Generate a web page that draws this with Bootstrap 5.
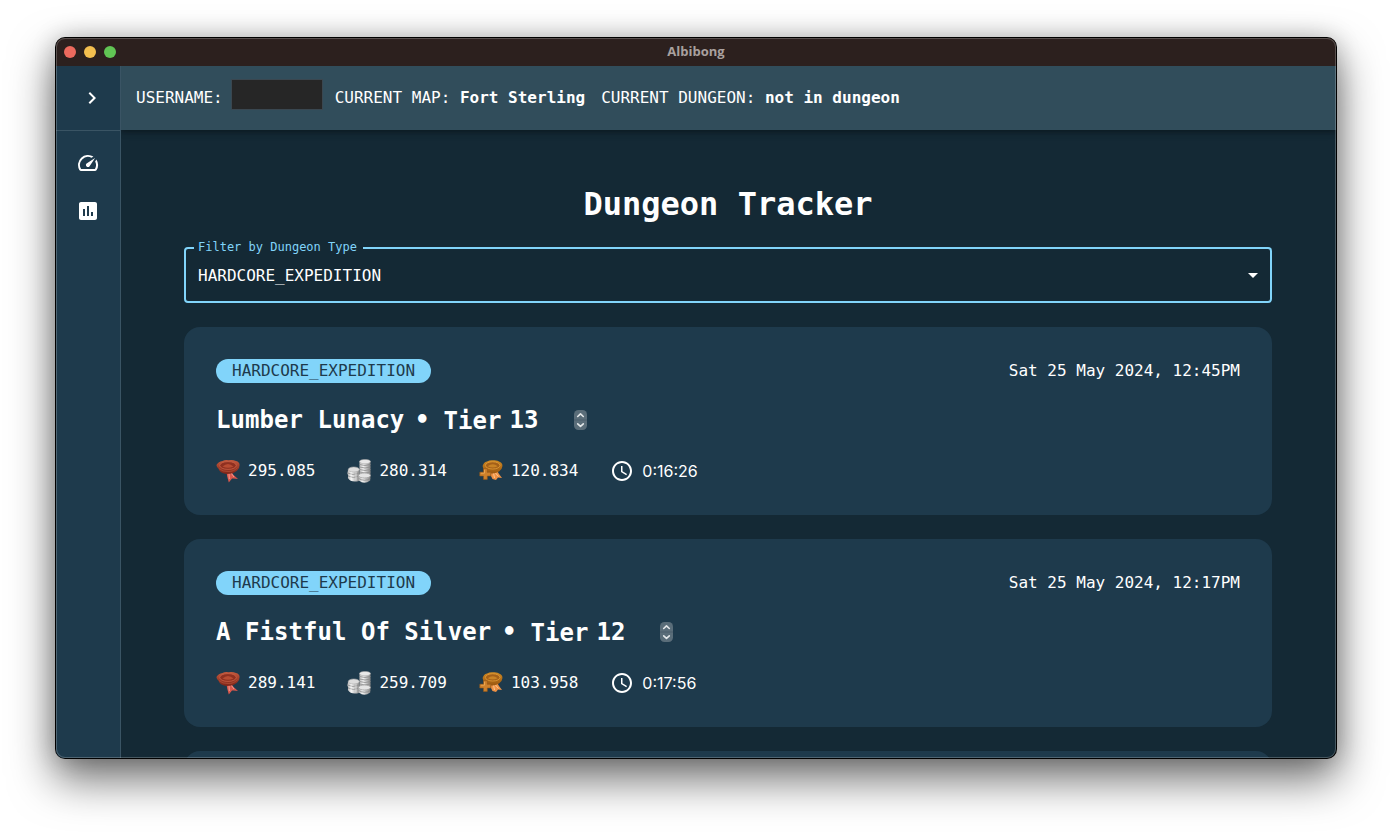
<!DOCTYPE html>
<html lang="en" data-bs-theme="dark">
<head>
<meta charset="utf-8">
<meta name="viewport" content="width=device-width, initial-scale=1">
<title>Albibong</title>
<link href="https://cdn.jsdelivr.net/npm/bootstrap@5.3.0/dist/css/bootstrap.min.css" rel="stylesheet">
<style>
body{background:#fff;color:#fff;font:16px/24px "DejaVu Sans Mono",monospace;height:832px;overflow:hidden;padding:38px 56px}
.app-window{width:1280px;height:720px;border-radius:9px;background:#142935;box-shadow:0 0 0 1px #000,0 20px 44px 2px rgba(0,0,0,.55),0 0 24px rgba(0,0,0,.22)}
.app-window::after{content:"";position:absolute;inset:0;border:1px solid rgba(255,255,255,.22);border-radius:9px;pointer-events:none;z-index:3}
.titlebar{height:28px;background:#2c201e;color:#a9a09f;font:bold 13px/27px "Open Sans",sans-serif}
.lights{left:8px;top:8px;gap:8px}
.lights span{width:12px;height:12px;border-radius:50%}
.l-red{background:#ed6a5e}.l-yellow{background:#f4bf4f}.l-green{background:#61c554}
.sidebar{width:65px;background:#1e3a4c;border-right:1px solid #3a5464;position:relative;z-index:2}
.side-toggle{height:65px;border-bottom:1px solid #3a5464;padding-left:8px}
.side-item{height:48px}
.infobar{height:64px;background:#314d5b;padding:0 15px;box-shadow:0 2px 4px -1px rgba(0,0,0,.2),0 4px 5px rgba(0,0,0,.14),0 1px 10px rgba(0,0,0,.12);z-index:1;white-space:pre}
.redacted{width:92px;height:31px;background:#262626;border:1px solid #3a4750;margin:-7px 12px 0 8px}
.content{padding:50px 64px 0 63px}
.page-title{font-size:32px;line-height:48px;font-weight:700}
.filter{height:56px;border:2px solid #81d4fa;border-radius:4px;margin:18.5px 0 24px;padding:0 5px 0 12px}
.filter-label{left:8px;top:-12px;font-size:12px;line-height:20px;color:#81d4fa;background:#142935;padding:0 6px 0 4px}
.filter-value{padding-top:2px}
.run{background:#1e3a4c;border-radius:16px;height:188px;padding:32px;margin-bottom:24px}
.type-pill{background:#81d4fa;color:#1e3a4c;border-radius:12px;padding:0 16px;height:24px;line-height:23px}
.when{line-height:23px}
.run-name{font-size:24px;line-height:36px;font-weight:700;margin-top:19px;letter-spacing:.04px}
.dot{margin:0 14px 0 10.7px}
.tier{padding-top:1px;margin-right:8px}
.stepper{width:13px;height:20px;margin-left:35px}
.stats{margin-top:19px;gap:32px;height:26px}
.stats>div{gap:8px}
.stats svg{flex:none}
.elapsed{font-family:Inter,sans-serif;font-size:16px;padding-top:1px}
</style>
</head>
<body>
<svg width="0" height="0" class="position-absolute">
<defs>
<linearGradient id="gRed" x2="0" y2="1"><stop stop-color="#c65a3d"/><stop offset="1" stop-color="#7c2418"/></linearGradient>
<linearGradient id="gGold" x2="0" y2="1"><stop stop-color="#d18a22"/><stop offset="1" stop-color="#995610"/></linearGradient>
<linearGradient id="gSilver"><stop stop-color="#bbb"/><stop offset=".35" stop-color="#f2f2f2"/><stop offset="1" stop-color="#858585"/></linearGradient>
<symbol id="fame" viewBox="0 0 24 24">
<path d="M10.500 12.500l4.500-.5 2.500 4 4.500 4-4.500-.6-1.500.2-3.200 4-1.600-6z" fill="#d9574c"/><path d="M13 14l.3 6M15 14l3 4" stroke="#f39a90" fill="none"/>
<path d="M.4 6Q2.500 2.500 6.500 1.900 9 .6 12.500 1.200q4-.9 7.500.9 3.500.9 3.600 4 .2 3-2.600 5.600-3 2.600-7 3.100l-4 .2Q4 14 2.300 9.500.7 8 .4 6z" fill="url(#gRed)"/>
<ellipse cx="12" cy="6.500" rx="8.300" ry="3.900" fill="#8f3020" stroke="#d0654a" stroke-width=".7"/><path d="M6.500 7.500q5.500-5 11 0-5.500 2.500-11 0" fill="#b84c32"/><path d="M3 9.500q3.500 3.300 9 3 6 .3 9.500-4" stroke="#b04c35" fill="none" stroke-width=".8"/>
</symbol>
<symbol id="silver" viewBox="0 0 24 24">
<path d="M12.500 2.500v14h11v-14z" fill="url(#gSilver)"/><path d="M12.500 5.500q5.500 2 11 0M12.500 8q5.500 2 11 0M12.500 10.500q5.500 2 11 0M12.500 13q5.500 2 11 0" stroke="#8b8b8b" fill="none" stroke-width=".8"/><ellipse cx="18" cy="2.600" rx="5.500" ry="2.200" fill="#e8e8e8" stroke="#aaa" stroke-width=".6"/>
<path d="M1 11L.4 14.500l.8 2-.3 2.500q2 3.500 7 3.500 4 0 4.800-1.500l-.2-11z" fill="url(#gSilver)"/><path d="M.5 14q5 3 12 0M1 17q5 3 11.500 0" stroke="#909090" fill="none" stroke-width=".8"/><path d="M4 12v9M9 12.500v9" stroke="#fff" opacity=".5"/><ellipse cx="6.800" cy="10.500" rx="5.500" ry="2.500" fill="#ddd" stroke="#aaa" stroke-width=".6"/>
<path d="M11.500 16.500l.3 5q5.500 4.500 11.400 0l.3-5z" fill="url(#gSilver)"/><path d="M11.700 19.500q6 3.500 11.600 0" stroke="#888" fill="none" stroke-width=".8"/><ellipse cx="17.500" cy="16.500" rx="6" ry="2.500" fill="#e4e4e4" stroke="#999" stroke-width=".7"/>
</symbol>
<symbol id="respec" viewBox="0 0 24 24">
<path d="M12 13l6-1.500 2 3.500 3 4-4-.5-2 2.500-3.500-1-1.500-3z" fill="#ee9145"/><path d="M14.500 14l1 5M16.500 14l3 3.500" stroke="#ffc68c" fill="none"/>
<path d="M3.600 7Q4.500 3.300 8 2.400 11 .8 14.500 1.300q4-.3 6.500 1.800 2.700 1.300 2.400 4.200-.2 3.200-3.400 5.200-2.500 1.700-6 2-4 .5-6-1.500-3.500-1-4.400-6z" fill="url(#gGold)"/>
<ellipse cx="13.700" cy="6.400" rx="7.300" ry="3.600" fill="#a46018" stroke="#eaa53e" stroke-width=".7"/><path d="M8.700 7.300q5-4.300 10 0-5 2.500-10 0" fill="#c98325"/>
<path d="M4.500 9.700h3.800v3.500h3.600V17H8.300v3.400H4.500V17H.8v-3.800h3.700z" fill="#ce812c" stroke="#965717" stroke-width=".6"/><path d="M5.500 10.700v3.500H1.800" stroke="#f1ac55" fill="none" stroke-width=".8"/>
</symbol>
<symbol id="clock" viewBox="0 0 24 24"><path fill="#fff" d="M11.990 2C6.470 2 2 6.480 2 12s4.470 10 9.990 10C17.520 22 22 17.520 22 12S17.520 2 11.990 2zM12 20c-4.420 0-8-3.580-8-8s3.580-8 8-8 8 3.580 8 8-3.580 8-8 8zm.5-13H11v6l5.250 3.150.75-1.230-4.500-2.670z"/></symbol>
<symbol id="stepper" viewBox="0 0 13 20"><rect width="13" height="20" rx="4.500" fill="#5a6d79"/><path d="M0 10h13" stroke="#4a5f6c"/><path d="M3.700 6.500l2.800-2.600 2.800 2.600M3.700 13.800l2.800 2.600 2.800-2.600" fill="none" stroke="#e4e8ea" stroke-width="1.600" stroke-linecap="round" stroke-linejoin="round"/></symbol>
</defs>
</svg>

<div class="app-window position-relative d-flex flex-column">
  <div class="titlebar position-relative text-center rounded-top-3 flex-shrink-0">
    <div class="lights position-absolute d-flex"><span class="l-red"></span><span class="l-yellow"></span><span class="l-green"></span></div>
    Albibong
  </div>
  <div class="d-flex flex-grow-1 overflow-hidden rounded-bottom-3">
    <nav class="sidebar flex-shrink-0">
      <div class="side-toggle d-flex align-items-center justify-content-center mb-2">
        <svg width="24" height="24" viewBox="0 0 24 24" fill="#fff"><path d="M10 6 8.590 7.410 13.170 12l-4.580 4.590L10 18l6-6z"/></svg>
      </div>
      <div class="side-item d-flex align-items-center justify-content-center">
        <svg width="24" height="24" viewBox="0 0 24 24" fill="#fff"><path d="m20.380 8.570-1.230 1.850a8 8 0 0 1-.22 7.580H5.070A8 8 0 0 1 15.580 6.850l1.850-1.230A10 10 0 0 0 3.350 19a2 2 0 0 0 1.720 1h13.850a2 2 0 0 0 1.740-1 10 10 0 0 0-.27-10.440zm-9.790 6.840a2 2 0 0 0 2.830 0l5.660-8.490-8.490 5.660a2 2 0 0 0 0 2.830z"/></svg>
      </div>
      <div class="side-item d-flex align-items-center justify-content-center">
        <svg width="24" height="24" viewBox="0 0 24 24" fill="#fff"><path d="M19 3H5c-1.100 0-2 .9-2 2v14c0 1.100.9 2 2 2h14c1.100 0 2-.9 2-2V5c0-1.100-.9-2-2-2zM9 17H7v-7h2v7zm4 0h-2V7h2v10zm4 0h-2v-4h2v4z"/></svg>
      </div>
    </nav>
    <div class="flex-grow-1 d-flex flex-column">
      <header class="infobar position-relative d-flex align-items-center flex-shrink-0"><span>USERNAME:</span><span class="redacted"></span><span>CURRENT MAP: <b>Fort Sterling</b></span><span class="ms-3">CURRENT DUNGEON: <b>not in dungeon</b></span></header>
      <main class="content">
        <h1 class="page-title text-center mb-0">Dungeon Tracker</h1>
        <div class="filter position-relative d-flex align-items-center justify-content-between">
          <span class="filter-label position-absolute">Filter by Dungeon Type</span>
          <span class="filter-value">HARDCORE_EXPEDITION</span>
          <svg width="24" height="24" viewBox="0 0 24 24" fill="#fff"><path d="m7 10 5 5 5-5z"/></svg>
        </div>
        <section class="run">
          <div class="d-flex justify-content-between"><span class="type-pill">HARDCORE_EXPEDITION</span><span class="when">Sat 25 May 2024, 12:45PM</span></div>
          <div class="run-name d-flex align-items-center"><span>Lumber Lunacy</span><span class="dot">•</span><span class="tier">Tier</span><span>13</span><svg class="stepper"><use href="#stepper"/></svg></div>
          <div class="stats d-flex align-items-center">
            <div class="d-flex align-items-center"><svg width="24" height="24"><use href="#fame"/></svg><span>295.085</span></div>
            <div class="d-flex align-items-center"><svg width="24" height="24"><use href="#silver"/></svg><span>280.314</span></div>
            <div class="d-flex align-items-center"><svg width="24" height="24"><use href="#respec"/></svg><span>120.834</span></div>
            <div class="d-flex align-items-center"><svg width="24" height="24"><use href="#clock"/></svg><span class="elapsed">0:16:26</span></div>
          </div>
        </section>
        <section class="run">
          <div class="d-flex justify-content-between"><span class="type-pill">HARDCORE_EXPEDITION</span><span class="when">Sat 25 May 2024, 12:17PM</span></div>
          <div class="run-name d-flex align-items-center"><span>A Fistful Of Silver</span><span class="dot">•</span><span class="tier">Tier</span><span>12</span><svg class="stepper"><use href="#stepper"/></svg></div>
          <div class="stats d-flex align-items-center">
            <div class="d-flex align-items-center"><svg width="24" height="24"><use href="#fame"/></svg><span>289.141</span></div>
            <div class="d-flex align-items-center"><svg width="24" height="24"><use href="#silver"/></svg><span>259.709</span></div>
            <div class="d-flex align-items-center"><svg width="24" height="24"><use href="#respec"/></svg><span>103.958</span></div>
            <div class="d-flex align-items-center"><svg width="24" height="24"><use href="#clock"/></svg><span class="elapsed">0:17:56</span></div>
          </div>
        </section>
        <section class="run"></section>
      </main>
    </div>
  </div>
</div>
<script src="https://cdn.jsdelivr.net/npm/bootstrap@5.3.0/dist/js/bootstrap.bundle.min.js"></script>
</body>
</html>
